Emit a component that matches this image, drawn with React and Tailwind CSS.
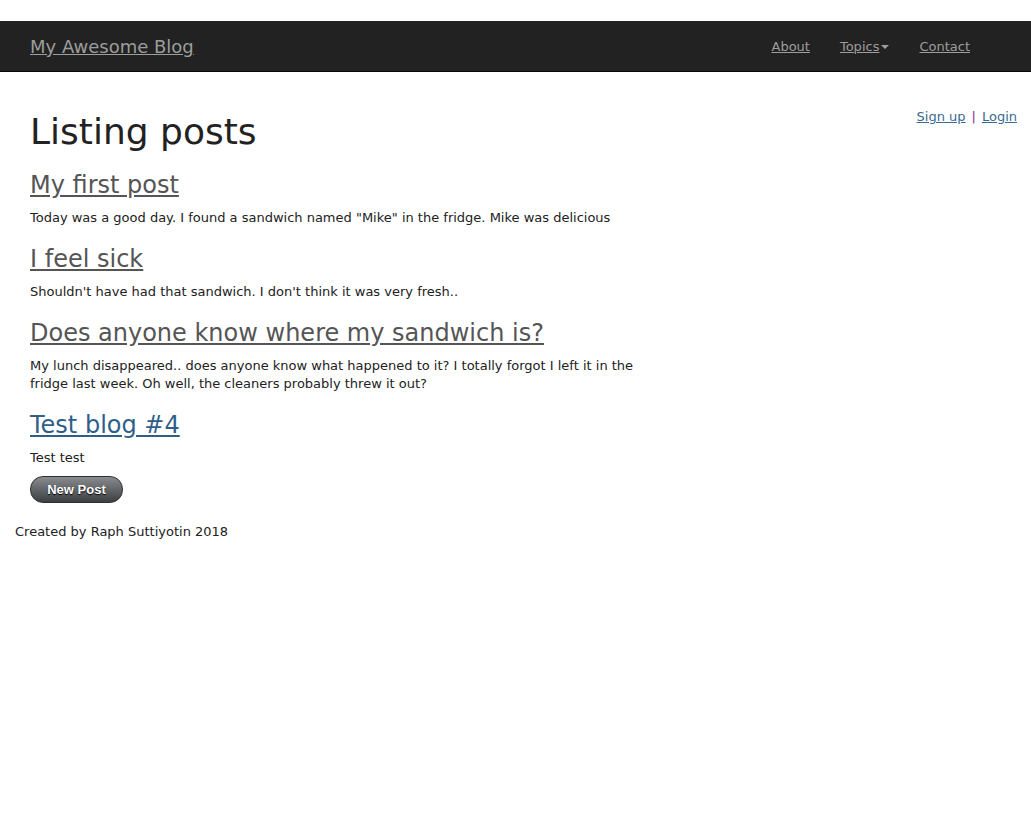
import React from 'react';

const posts = [
  {
    title: 'My first post',
    body: 'Today was a good day. I found a sandwich named "Mike" in the fridge. Mike was delicious',
    visited: true,
  },
  {
    title: 'I feel sick',
    body: "Shouldn't have had that sandwich. I don't think it was very fresh..",
    visited: true,
  },
  {
    title: 'Does anyone know where my sandwich is?',
    body: 'My lunch disappeared.. does anyone know what happened to it? I totally forgot I left it in the fridge last week. Oh well, the cleaners probably threw it out?',
    visited: true,
  },
  {
    title: 'Test blog #4',
    body: 'Test test',
    visited: false,
  },
];

const App = () => {
  return (
    <div className="min-h-[826px] bg-white text-[13px] text-[#333] font-['Verdana','DejaVu_Sans',sans-serif]">
      {/* Navbar */}
      <div className="pt-[21px]">
        <nav className="h-[51px] bg-[#222] border-b border-[#080808] flex items-center justify-between pl-[30px] pr-[61px] pt-[2px]">
          <a href="#" className="text-[18px] text-[#9d9d9d] underline leading-none">
            My Awesome Blog
          </a>
          <ul className="flex items-center gap-[30px] text-[13px] text-[#9d9d9d]">
            <li>
              <a href="#" className="underline">About</a>
            </li>
            <li className="flex items-center">
              <a href="#" className="underline">Topics</a>
              <span className="ml-[2px] w-0 h-0 border-l-[4px] border-r-[4px] border-t-[4px] border-l-transparent border-r-transparent border-t-[#9d9d9d]"></span>
            </li>
            <li>
              <a href="#" className="underline">Contact</a>
            </li>
          </ul>
        </nav>
      </div>

      <div className="flex justify-between">
        {/* Posts */}
        <div className="pl-[30px] pt-[38px] w-[660px]">
          <h1 className="text-[36px] leading-[44px] text-[#222] mb-[16px]">Listing posts</h1>
          {posts.map((post) => (
            <div key={post.title} className="mb-[17px]">
              <a
                href="#"
                className={`text-[24px] leading-[30px] underline ${post.visited ? 'text-[#555]' : 'text-[#2f5f88]'}`}
              >
                {post.title}
              </a>
              <p className="mt-[9px] leading-[18px] text-[#222]">{post.body}</p>
            </div>
          ))}
          <button className="block mt-[-8px] h-[27px] w-[93px] rounded-[13px] border border-[#2e3033] bg-gradient-to-b from-[#8a8c8f] to-[#3d4043] text-white font-bold text-[13px] font-['Liberation_Sans',Arial,sans-serif] [text-shadow:0_1px_1px_#000]">
            New Post
          </button>
        </div>

        <div className="pr-[14px] pt-[38px] text-[13px] leading-none">
          <a href="#" className="text-[#3a6a8f] underline">Sign up</a>
          <span className="mx-[6px] text-[#8a2a8a]">|</span>
          <a href="#" className="text-[#3a6a8f] underline">Login</a>
        </div>
      </div>

      <footer className="pl-[15px] mt-[20px] leading-[18px] text-[13px] text-[#222]">Created by Raph Suttiyotin 2018</footer>
    </div>
  );
};

export default App;
